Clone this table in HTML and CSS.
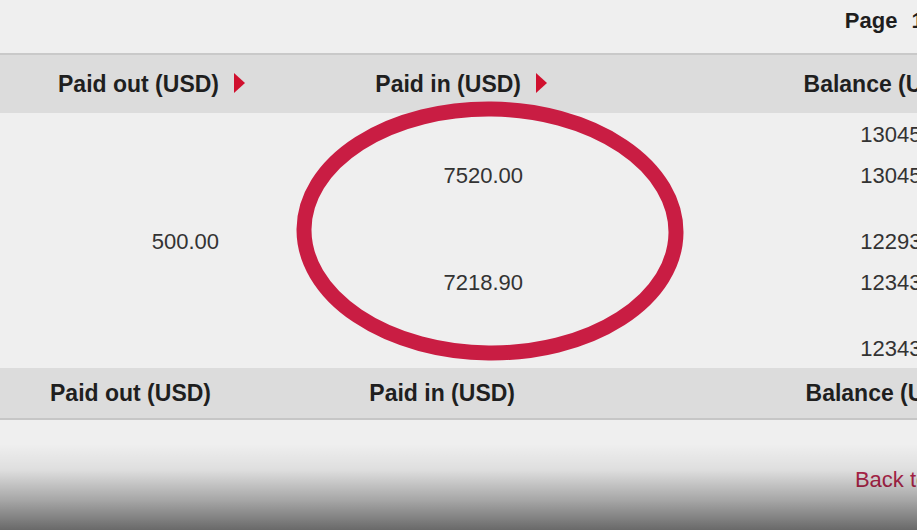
FILE: index.html
```html
<!DOCTYPE html>
<html lang="en">
<head>
<meta charset="utf-8">
<title>Statement</title>
<link rel="stylesheet" href="styles.css">
</head>
<body>
<div class="page">
  <div class="topbar"><span class="pageno">Page 1 of 1</span></div>

  <div class="band band-head">
    <div class="hcell col-out"><span>Paid out (USD)</span><i class="arrow"></i></div>
    <div class="hcell col-in"><span>Paid in (USD)</span><i class="arrow"></i></div>
    <div class="hcell col-bal"><span>Balance (USD)</span><i class="arrow"></i></div>
  </div>

  <div class="tbody">
    <div class="row">
      <div class="cell col-out"></div>
      <div class="cell col-in"></div>
      <div class="cell col-bal">13045.27</div>
    </div>
    <div class="row row-tall">
      <div class="cell col-out"></div>
      <div class="cell col-in">7520.00</div>
      <div class="cell col-bal">13045.27</div>
    </div>
    <div class="row">
      <div class="cell col-out">500.00</div>
      <div class="cell col-in"></div>
      <div class="cell col-bal">12293.37</div>
    </div>
    <div class="row row-tall">
      <div class="cell col-out"></div>
      <div class="cell col-in">7218.90</div>
      <div class="cell col-bal">12343.37</div>
    </div>
    <div class="row">
      <div class="cell col-out"></div>
      <div class="cell col-in"></div>
      <div class="cell col-bal">12343.37</div>
    </div>
  </div>

  <div class="band band-foot">
    <div class="fcell col-out">Paid out (USD)</div>
    <div class="fcell col-in">Paid in (USD)</div>
    <div class="fcell col-bal">Balance (USD)</div>
  </div>

  <div class="bottom"><a class="backtop" href="#">Back to top</a></div>

  <svg class="mark" width="917" height="530" viewBox="0 0 917 530" aria-hidden="true">
    <ellipse cx="490" cy="231" rx="186" ry="122" fill="none" stroke="#c91d43" stroke-width="15" transform="rotate(0.6 490 231)"/>
  </svg>
  <div class="shade"></div>
</div>
</body>
</html>
```

FILE: styles.css
```css
html, body {
  margin: 0;
  padding: 0;
  background: #efefef;
  overflow: hidden;
}

body {
  width: 917px;
  height: 530px;
  position: relative;
  font-family: "Liberation Sans", Arial, sans-serif;
  color: #2a2a2a;
}

.page {
  width: 1003px;
  height: 530px;
  display: flex;
  flex-direction: column;
}

.topbar {
  height: 53px;
  border-bottom: 2px solid #c9c9c9;
  display: flex;
  justify-content: flex-end;
  padding-right: 18px;
  box-sizing: content-box;
}

.pageno {
  font-weight: bold;
  font-size: 22px;
  line-height: 26px;
  padding-top: 8px;
  word-spacing: 8px;
  color: #1e1e1e;
}

.band {
  display: grid;
  grid-template-columns: 260px 302px 441px;
  background: #dcdcdc;
}

.band-head {
  height: 58px;
}

.band-foot {
  height: 50px;
  border-bottom: 2px solid #c6c6c6;
}

.hcell, .fcell {
  display: flex;
  align-items: center;
  justify-content: flex-end;
  font-weight: bold;
  font-size: 23px;
  line-height: 26px;
  color: #1f1f1f;
}

.hcell {
  gap: 15px;
  padding-right: 15px;
}

.hcell span {
  white-space: nowrap;
}

.fcell.col-out { padding-right: 49px; }
.fcell.col-in { padding-right: 47px; }
.fcell.col-bal { padding-right: 39px; }

.arrow {
  display: block;
  width: 0;
  height: 0;
  border-top: 10px solid transparent;
  border-bottom: 10px solid transparent;
  border-left: 11px solid #d0102e;
  margin-top: -2px;
}

.tbody {
  display: flex;
  flex-direction: column;
}

.row {
  display: grid;
  grid-template-columns: 260px 302px 441px;
  height: 41px;
}

.row-tall {
  height: 66px;
}

.cell {
  font-size: 22px;
  line-height: 26px;
  padding-top: 9px;
  text-align: right;
  color: #333;
}

.cell.col-out { padding-right: 41px; }
.cell.col-in { padding-right: 39px; }
.cell.col-bal { padding-right: 51px; }

.bottom {
  display: flex;
  justify-content: flex-end;
  padding-right: 38px;
  padding-top: 47px;
}

.backtop {
  font-size: 22px;
  line-height: 26px;
  color: #b5264c;
  text-decoration: none;
}

.mark {
  position: absolute;
  left: 0;
  top: 0;
  pointer-events: none;
  filter: blur(0.5px);
}

.shade {
  position: absolute;
  left: 0;
  right: 0;
  bottom: 0;
  height: 86px;
  background: linear-gradient(to bottom, rgba(0,0,0,0) 0%, rgba(0,0,0,0.07) 30%, rgba(0,0,0,0.3) 65%, rgba(0,0,0,0.56) 100%);
  pointer-events: none;
}
```
